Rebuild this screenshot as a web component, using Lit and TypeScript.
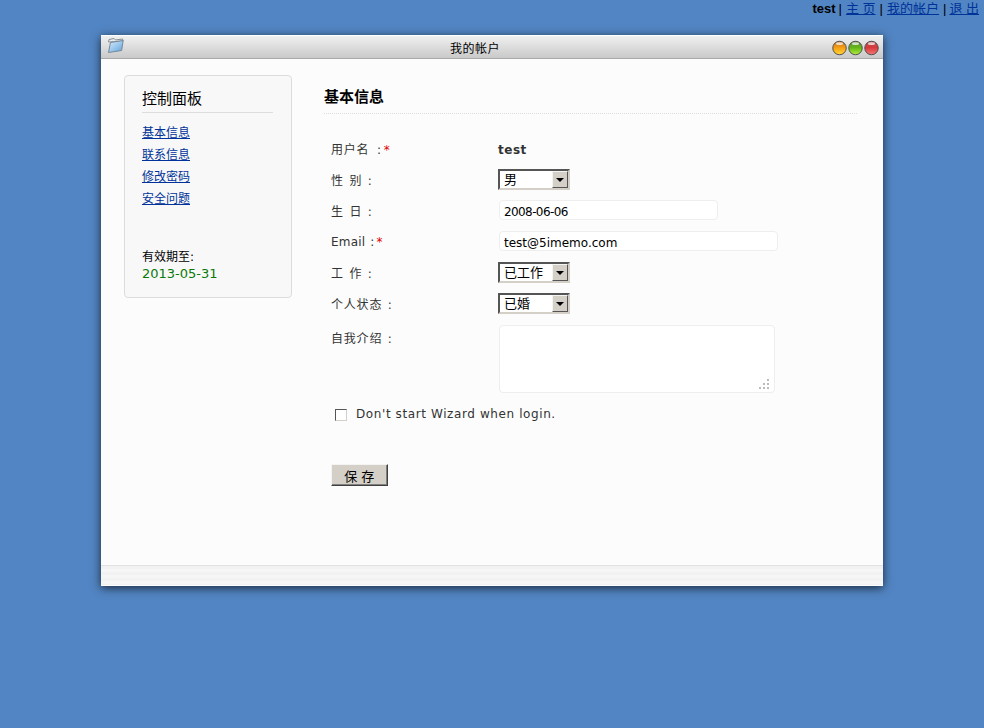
import { LitElement, html, css, svg } from "lit";
import { customElement } from "lit/decorators.js";

@customElement("app-root")
export class AppRoot extends LitElement {
  static styles = css`
    :host {
      display: block;
      min-height: 728px;
      background: #5285c3;
      font-family: "DejaVu Sans", "Noto Sans CJK SC", sans-serif;
      font-size: 12px;
      color: #333;
      overflow: hidden;
    }
    .top {
      height: 35px;
      box-sizing: border-box;
      padding: 1px 5px 0 0;
      display: flex;
      justify-content: flex-end;
      gap: 4px;
      font-family: "Liberation Sans", "Noto Sans CJK SC", sans-serif;
      font-size: 13px;
      line-height: 15px;
      color: #000;
    }
    .top a { color: #003399; text-decoration: underline; }
    .top a.last { margin-left: -1px; }
    .top b { font-weight: 700; margin-right: -1px; }
    .window {
      width: 782px;
      height: 551px;
      margin-left: 101px;
      background: #fcfcfc;
      box-shadow: 0 2px 9px rgba(0, 0, 0, 0.7);
      display: flex;
      flex-direction: column;
    }
    .titlebar {
      height: 24px;
      flex: none;
      box-sizing: border-box;
      display: grid;
      grid-template-columns: 26px 1fr 60px;
      align-items: center;
      background: linear-gradient(#f0f0f0, #c9c9c9);
      border-top: 1px solid #fff;
      border-bottom: 1px solid #a8a8a8;
      color: #000;
      font-size: 12px;
      letter-spacing: 0.5px;
      text-align: center;
    }
    .folder { display: block; margin: -3px 0 0 6px; }
    .lights { display: flex; justify-content: flex-end; gap: 1px; padding: 2px 4px 0 0; }
    .lights svg { display: block; }
    .content {
      flex: 1;
      display: flex;
      align-items: flex-start;
      padding: 16px 0 0 23px;
      gap: 32px;
    }
    .panel {
      width: 168px;
      height: 223px;
      box-sizing: border-box;
      flex: none;
      padding: 13px 18px 0 17px;
      background: #f8f8f8;
      border: 1px solid #dcdcdc;
      border-radius: 4px;
      color: #000;
    }
    .panel h2 {
      margin: 0 0 9px;
      padding-bottom: 2px;
      font-size: 15px;
      line-height: 21px;
      font-weight: 400;
      border-bottom: 1px solid #dddddd;
    }
    .links { display: flex; flex-direction: column; }
    .links a { color: #003399; text-decoration: underline; line-height: 22px; font-size: 12px; }
    .expire { margin-top: 38px; line-height: 18px; }
    .date { color: #0a7a0a; font-size: 13px; line-height: 17px; margin-top: -1px; }
    .main { width: 533px; padding-top: 12px; flex: none; }
    .main h1 {
      margin: 0;
      font-size: 15px;
      line-height: 21px;
      font-weight: 700;
      color: #000;
      padding-bottom: 5px;
      border-bottom: 1px dotted #dddddd;
    }
    .form {
      margin: 19px 0 0 7px;
      display: grid;
      grid-template-columns: 167px 1fr;
      grid-template-rows: repeat(6, 31px) 74px;
      align-items: center;
      letter-spacing: 0.8px;
      word-spacing: 1px;
    }
    .latin-label { letter-spacing: 0.2px; }
    .wide-label { word-spacing: 3px; }
    .star { color: #e00000; margin-left: 2px; }
    .val { font-weight: 700; font-size: 12px; letter-spacing: 0.5px; padding-top: 2px; }
    .sel {
      width: 72px;
      height: 21px;
      box-sizing: border-box;
      display: flex;
      align-items: center;
      background: #fff;
      border: 2px solid;
      border-color: #555 #d4d0c8 #d4d0c8 #555;
      color: #000;
      padding-left: 4px;
      font-size: 13px;
      letter-spacing: 0;
    }
    .sel span { flex: 1; margin-top: -2px; }
    .arrow {
      width: 16px;
      height: 17px;
      background: #d4d0c8;
      border: 1px solid;
      border-color: #f4f4f4 #555 #555 #f4f4f4;
      box-sizing: border-box;
      display: flex;
      align-items: center;
      justify-content: center;
    }
    .arrow i {
      width: 0;
      height: 0;
      border: 4px solid transparent;
      border-top: 4px solid #000;
      border-bottom: 0;
    }
    input.text {
      display: block;
      box-sizing: border-box;
      height: 20px;
      margin: -2px 0 0 1px;
      padding: 4px 4px 0;
      background: #fff;
      border: 1px solid #eeeeee;
      border-radius: 4px;
      font: inherit;
      letter-spacing: 0;
      word-spacing: 0;
      color: #000;
      outline: none;
    }
    input.digits { letter-spacing: -0.6px; }
    .w1 { width: 219px; }
    .w2 { width: 279px; }
    .top-label { align-self: start; padding-top: 10px; }
    .areacell { align-self: start; }
    .areawrap { position: relative; width: 276px; height: 68px; margin: 6px 0 0 1px; }
    textarea {
      display: block;
      width: 100%;
      height: 100%;
      box-sizing: border-box;
      background: #fff;
      border: 1px solid #eeeeee;
      border-radius: 4px;
      resize: none;
      outline: none;
    }
    .grip { position: absolute; right: 5px; bottom: 3px; display: block; }
    .check {
      margin: 14px 0 0 11px;
      display: flex;
      align-items: center;
      gap: 9px;
      letter-spacing: 0.6px;
    }
    .box {
      width: 12px;
      height: 12px;
      margin-top: 2px;
      box-sizing: border-box;
      background: #fff;
      border: 1px solid;
      border-color: #555 #d4d0c8 #d4d0c8 #555;
      flex: none;
    }
    .save {
      display: block;
      margin: 43px 0 0 7px;
      width: 57px;
      height: 22px;
      box-sizing: border-box;
      padding: 0;
      background: #d4d0c8;
      border: 1px solid;
      border-color: #f4f4f4 #404040 #404040 #f4f4f4;
      box-shadow: inset -1px -1px 0 #808080;
      color: #000;
      font: 13px "Noto Sans CJK SC", sans-serif;
      letter-spacing: 0.5px;
    }
    .footer {
      height: 21px;
      flex: none;
      box-sizing: border-box;
      border-top: 1px solid #e2e2e2;
      border-bottom: 1px solid #fff;
      background: repeating-linear-gradient(#f2f2f2 0 3px, #f6f6f6 3px 6px);
    }
  `;

  private ball(id: string, top: string, mid: string, bottom: string) {
    return svg`
      <defs>
        <linearGradient id=${id} x1="0" y1="0" x2="0" y2="1">
          <stop offset="0" stop-color=${top}/>
          <stop offset="0.45" stop-color=${mid}/>
          <stop offset="1" stop-color=${bottom}/>
        </linearGradient>
      </defs>
      <circle cx="8" cy="8" r="7.2" fill=${`url(#${id})`} stroke="#4a4a4a" stroke-width="1"/>
      <ellipse cx="8" cy="3.4" rx="3.8" ry="1.5" fill="#fff" opacity="0.7"/>`;
  }

  private select(v: string) {
    return html`<div class="sel"><span>${v}</span><div class="arrow"><i></i></div></div>`;
  }

  render() {
    return html`
      <div class="top">
        <b>test</b><span>|</span><a>主 页</a><span>|</span><a>我的帐户</a><span>|</span><a class="last">退 出</a>
      </div>
      <div class="window">
        <div class="titlebar">
          <svg class="folder" width="17" height="17" viewBox="0 0 17 17">
            <defs>
              <linearGradient id="fb" x1="0" y1="0" x2="1" y2="1">
                <stop offset="0" stop-color="#dcecfa"/>
                <stop offset="0.6" stop-color="#8fc0ea"/>
                <stop offset="1" stop-color="#5f9fcf"/>
              </linearGradient>
            </defs>
            <path d="M1.5 5 L2 2.5 L7 1.5 L8.5 3 L15.5 2 L16 4 Z" fill="#ececec" stroke="#868e96"/>
            <path d="M3.5 5.5 L16.2 3.5 L14.6 13.5 L1.5 15.5 Z" fill="url(#fb)" stroke="#76889a"/>
          </svg>
          <span>我的帐户</span>
          <div class="lights">
            <svg width="15" height="16" viewBox="0 0 16 16">${this.ball("o", "#b8763a", "#f59a10", "#ffd838")}</svg>
            <svg width="15" height="16" viewBox="0 0 16 16">${this.ball("g", "#6e8a50", "#62b414", "#b0ee40")}</svg>
            <svg width="15" height="16" viewBox="0 0 16 16">${this.ball("r", "#a86060", "#d83838", "#f47878")}</svg>
          </div>
        </div>
        <div class="content">
          <aside class="panel">
            <h2>控制面板</h2>
            <nav class="links">
              <a>基本信息</a><a>联系信息</a><a>修改密码</a><a>安全问题</a>
            </nav>
            <div class="expire">有效期至:</div>
            <div class="date">2013-05-31</div>
          </aside>
          <section class="main">
            <h1>基本信息</h1>
            <div class="form">
              <div class="wide-label">用户名 :<span class="star">*</span></div>
              <div class="val">test</div>
              <div>性 别 :</div>
              ${this.select("男")}
              <div>生 日 :</div>
              <div><input class="text w1 digits" value="2008-06-06" /></div>
              <div class="latin-label">Email :<span class="star">*</span></div>
              <div><input class="text w2" value="test@5imemo.com" /></div>
              <div>工 作 :</div>
              ${this.select("已工作")}
              <div>个人状态 :</div>
              ${this.select("已婚")}
              <div class="top-label">自我介绍 :</div>
              <div class="areacell">
                <div class="areawrap">
                  <textarea></textarea>
                  <svg class="grip" width="11" height="11" viewBox="0 0 11 11" fill="#bbb">
                    <rect x="8" y="0" width="2" height="2"/>
                    <rect x="4" y="4" width="2" height="2"/><rect x="8" y="4" width="2" height="2"/>
                    <rect x="0" y="8" width="2" height="2"/><rect x="4" y="8" width="2" height="2"/><rect x="8" y="8" width="2" height="2"/>
                  </svg>
                </div>
              </div>
            </div>
            <div class="check"><span class="box"></span><span>Don't start Wizard when login.</span></div>
            <button class="save">保 存</button>
          </section>
        </div>
        <div class="footer"></div>
      </div>
    `;
  }
}
